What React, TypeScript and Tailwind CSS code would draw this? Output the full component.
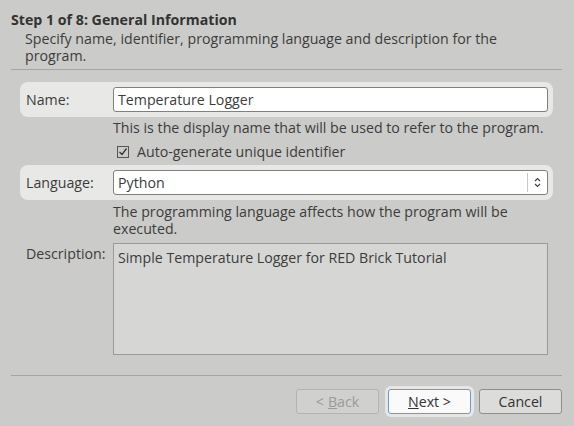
import React from "react";

export default function App() {
  return (
    <div
      className="w-[574px] h-[426px] bg-[#cbcbc9] text-[#3c3c3c] overflow-hidden flex flex-col"
      style={{ fontFamily: '"Open Sans", "Noto Sans", sans-serif' }}
    >
      <div className="pl-[11px] pt-[11px] text-[14.2px] leading-[17px]">
        <div className="font-bold text-[#333]">Step 1 of 8: General Information</div>
        <div className="pl-[14px] pr-[40px] mt-[2px]">
          Specify name, identifier, programming language and description for the program.
        </div>
      </div>
      <div className="mx-[11px] mt-[5px] h-px bg-[#a5a5a3] w-[551px]" />

      <div className="pl-[20px] pr-[21px] mt-[12px] flex flex-col text-[14.2px]">
        <div className="h-[35px] rounded-[8px] bg-[#e8e8e6] flex items-center pl-[6px] pr-[5px]">
          <div className="w-[87px]">Name:</div>
          <div className="flex-1 h-[25px] bg-white border border-[#7f7f7f] rounded-[3px] flex items-center pl-[4px]">
            Temperature Logger
          </div>
        </div>
        <div className="pl-[93px] h-[22px] flex items-center">
          This is the display name that will be used to refer to the program.
        </div>
        <div className="pl-[97px] h-[26px] flex items-center gap-[8px]">
          <svg width="12" height="12" viewBox="0 0 12 12">
            <rect x="0.5" y="0.5" width="11" height="11" fill="none" stroke="#555" />
            <path d="M2.5 6 L5 8.5 L9.5 2.5" fill="none" stroke="#333" strokeWidth="1.3" />
          </svg>
          <span>Auto-generate unique identifier</span>
        </div>
        <div className="h-[35px] rounded-[8px] bg-[#e8e8e6] flex items-center pl-[6px] pr-[5px]">
          <div className="w-[87px]">Language:</div>
          <div className="flex-1 h-[25px] bg-white border border-[#7f7f7f] rounded-[3px] flex items-center pl-[4px]">
            <span className="flex-1">Python</span>
            <div className="w-px h-[19px] bg-[#c8c8c8]" />
            <div className="w-[19px] flex justify-center">
              <svg width="7" height="11" viewBox="0 0 7 11">
                <path d="M1 4 L3.5 1.5 L6 4 M1 7 L3.5 9.5 L6 7" fill="none" stroke="#444" strokeWidth="1.2" />
              </svg>
            </div>
          </div>
        </div>
        <div className="pl-[93px] pr-[40px] mt-[3px] leading-[17px]">
          The programming language affects how the program will be executed.
        </div>
        <div className="flex mt-[6px] pl-[6px]">
          <div className="w-[87px] pt-[0px]">Description:</div>
          <div className="w-[435px] h-[112px] bg-[#d6d6d5] border border-[#9a9a98] px-[4px] pt-[3px]">
            Simple Temperature Logger for RED Brick Tutorial
          </div>
        </div>
      </div>

      <div className="mx-[11px] mt-[20px] h-px bg-[#a5a5a3] w-[551px]" />

      <div className="flex justify-end pr-[12px] mt-[13px] gap-[8px] text-[14.2px]">
        <div className="w-[83px] h-[25px] rounded-[3px] border border-[#b3b3b1] bg-[#d0d0ce] text-[#9b9b99] flex items-center justify-center">
          &lt; <span className="underline ml-[4px]">B</span>ack
        </div>
        <div className="rounded-[6px] bg-[#e6e6e4] p-[3px] -m-[3px] ml-[-2px]">
          <div className="w-[83px] h-[25px] rounded-[3px] border border-[#6e98cf] bg-[#fafafa] flex items-center justify-center text-[#333]">
            <span className="underline">N</span>ext &gt;
          </div>
        </div>
        <div className="w-[83px] h-[25px] rounded-[3px] border border-[#8e8e8c] bg-[#dcdcda] flex items-center justify-center text-[#333]">
          Cancel
        </div>
      </div>
    </div>
  );
}
